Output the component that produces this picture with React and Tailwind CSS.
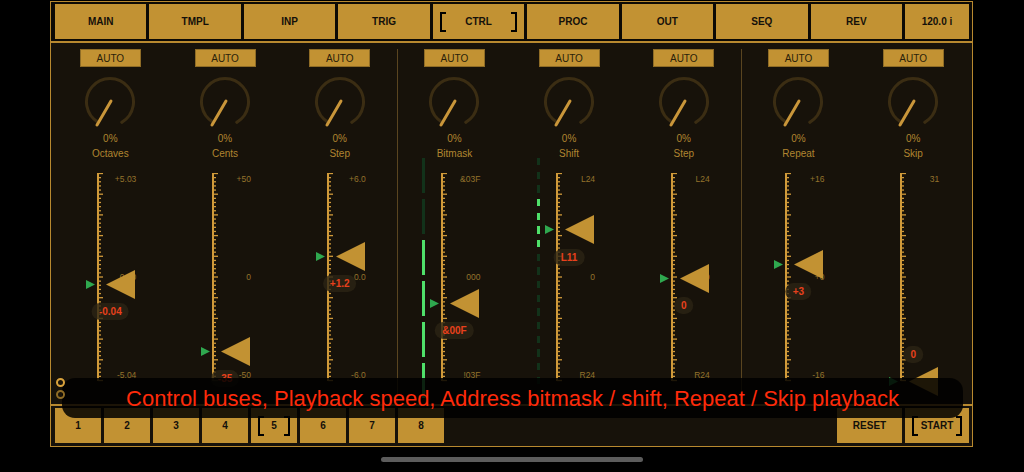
const NAV = ['MAIN', 'TMPL', 'INP', 'TRIG', 'CTRL', 'PROC', 'OUT', 'SEQ', 'REV'];
const SCENES = ['1', '2', '3', '4', '5', '6', '7', '8'];

// tip = y of the pointer tip on screen, badge = y of the value pill centre
const STRIPS = [
  { name: 'Octaves', top: '+5.03', mid: '0.00', bottom: '-5.04', tip: 284, badge: 311, value: '-0.04' },
  { name: 'Cents', top: '+50', mid: '0', bottom: '-50', tip: 351, badge: 378, value: '-35' },
  { name: 'Step', top: '+6.0', mid: '0.0', bottom: '-6.0', tip: 256, badge: 283, value: '+1.2', divider: true },
  { name: 'Bitmask', top: '&03F', mid: '000', bottom: '!03F', tip: 303, badge: 330, value: '&00F', level: { count: 6, lit: [2, 3, 4, 5] } },
  { name: 'Shift', top: 'L24', mid: '0', bottom: 'R24', tip: 229, badge: 257, value: 'L11', level: { count: 18, lit: [3, 4, 5, 6] } },
  { name: 'Step', top: 'L24', mid: '0', bottom: 'R24', tip: 278, badge: 305, value: '0', divider: true },
  { name: 'Repeat', top: '+16', mid: '+0', bottom: '-16', tip: 264, badge: 291, value: '+3' },
  { name: 'Skip', top: '31', mid: '', bottom: '', tip: 381, badge: 354, value: '0' },
];

const RULER_TOP = 173;

function Bracket({ side }) {
  return (
    <span
      className={
        side === 'left'
          ? 'h-[20px] w-[6px] border-y-2 border-l-2 border-black'
          : 'h-[20px] w-[6px] border-y-2 border-r-2 border-black'
      }
    />
  );
}

function NavButton({ label, selected, className = '' }) {
  return (
    <div className={`flex min-w-0 items-center bg-[#c29233] text-[10px] font-bold text-[#14100a] ${selected ? 'justify-between px-[7px]' : 'justify-center'} ${className}`}>
      {selected && <Bracket side="left" />}
      <span>{label}</span>
      {selected && <Bracket side="right" />}
    </div>
  );
}

function Knob() {
  return (
    <svg width="52" height="52" viewBox="0 0 52 52" className="mt-[9px]">
      <path d="M14.25 46.35 A23.5 23.5 0 1 1 37.75 46.35" fill="none" stroke="#3b2d13" strokeWidth="3" strokeLinecap="round" />
      <line x1="27" y1="25" x2="13" y2="49" stroke="#c9963a" strokeWidth="3" strokeLinecap="round" />
    </svg>
  );
}

function Ruler() {
  const ticks = [];
  for (let i = 0; i <= 50; i++) {
    const y = 0.5 + i * 4.14;
    const major = i % 5 === 0;
    ticks.push(<line key={i} x1="1" x2={major ? 6 : 4} y1={y} y2={y} stroke="#d09a3a" strokeWidth="1.3" />);
  }
  return (
    <svg width="6" height="209" viewBox="0 0 6 209" className="shrink-0">
      <line x1="1" x2="1" y1="0" y2="208" stroke="#d09a3a" strokeWidth="2" />
      {ticks}
    </svg>
  );
}

function LevelBar({ count, lit }) {
  const pitch = 246 / count;
  const height = count === 6 ? 35 : 7.3;
  return (
    <>
      {Array.from({ length: count }).map((_, i) => (
        <div
          key={i}
          className={lit.includes(i) ? 'absolute left-[-6px] w-[3px] bg-[#4fe06a]' : 'absolute left-[-6px] w-[3px] bg-[#12321a]'}
          style={{ top: -15 + i * pitch, height }}
        />
      ))}
    </>
  );
}

function Strip({ strip }) {
  return (
    <div className={`flex flex-col items-center border-r ${strip.divider ? 'border-[#5a4520]' : 'border-transparent'}`}>
      <div className="flex h-[18px] w-[61px] items-center justify-center border border-[#8f6c26] bg-[#c29233] text-[10px] text-[#2a1f0a]">
        AUTO
      </div>
      <Knob />
      <div className="mt-[5px] h-[12px] text-[10px] leading-[12px] text-[#b08530]">0%</div>
      <div className="mt-[3px] h-[12px] text-[10px] leading-[12px] text-[#b08530]">{strip.name}</div>
      <div className="relative mt-[13px] flex w-[52px]">
        {strip.level && <LevelBar count={strip.level.count} lit={strip.level.lit} />}
        <div className="ml-[13px]">
          <Ruler />
        </div>
        <div className="flex h-[208px] flex-1 flex-col justify-between text-right text-[8.5px] leading-[12px] text-[#94722c]">
          <span>{strip.top}</span>
          <span>{strip.mid}</span>
          <span>{strip.bottom}</span>
        </div>
        <svg width="9" height="9" viewBox="0 0 9 9" className="absolute left-[2px]" style={{ top: strip.tip - RULER_TOP - 4.5 }}>
          <polygon points="0,0 9,4.5 0,9" fill="#2fa84f" />
        </svg>
        <svg width="29" height="29" viewBox="0 0 29 29" className="absolute left-[22px]" style={{ top: strip.tip - RULER_TOP - 14.5 }}>
          <polygon points="0,14.5 29,0 29,29" fill="#c29233" />
        </svg>
        <div
          className="absolute left-1/2 flex h-[17px] -translate-x-1/2 items-center rounded-full bg-[#2c2414]/80 px-[7px] text-[10px] font-bold whitespace-nowrap text-[#e8401c]"
          style={{ top: strip.badge - RULER_TOP - 8.5 }}
        >
          {strip.value}
        </div>
      </div>
    </div>
  );
}

export default function App() {
  return (
    <div className="relative h-[472px] w-[1024px] overflow-hidden bg-black font-['Liberation_Sans',sans-serif]">
      <div className="mt-[1px] ml-[50px] flex h-[446px] w-[923px] flex-col border border-[#b8892f] bg-[#17120a]">
        <div className="grid h-[41px] shrink-0 grid-cols-[repeat(9,minmax(0,1fr))_64px] gap-[3px] border-b-2 border-[#b8892f] bg-[#0d0a05] pt-[2px] pr-[3px] pb-[2px] pl-[4px]">
          {NAV.map((label) => (
            <NavButton key={label} label={label} selected={label === 'CTRL'} />
          ))}
          <NavButton label="120.0 i" />
        </div>

        <div className="grid flex-1 grid-cols-8 pt-[6px] pr-[1px] pl-[2.5px]">
          {STRIPS.map((strip, i) => (
            <Strip key={i} strip={strip} />
          ))}
        </div>

        <div className="flex h-[42px] shrink-0 gap-[3px] border-t-2 border-[#b8892f] pt-[2px] pr-[3px] pb-[3px] pl-[4px]">
          {SCENES.map((label) => (
            <NavButton key={label} label={label} selected={label === '5'} className="w-[46px]" />
          ))}
          <div className="flex-1" />
          <NavButton label="RESET" className="w-[65px]" />
          <NavButton label="START" selected className="w-[64px]" />
        </div>
      </div>

      {/* caption sits over the strips and the scene row */}
      <div className="absolute top-[378px] left-[62px] flex h-[40px] w-[901px] items-center justify-center rounded-[13px] bg-black/85 text-[22px] text-[#ff2a0a]">
        Control buses, Playback speed, Address bitmask / shift, Repeat / Skip playback
      </div>
      <div className="absolute top-[378px] left-[56px] h-[9px] w-[9px] rounded-full border-2 border-[#d9a23c]" />
      <div className="absolute top-[390px] left-[56px] h-[9px] w-[9px] rounded-full border-2 border-[#8f6c26]" />

      <div className="absolute top-[457px] left-[381px] h-[5px] w-[262px] rounded-full bg-[#5c5c5c]" />
    </div>
  );
}
